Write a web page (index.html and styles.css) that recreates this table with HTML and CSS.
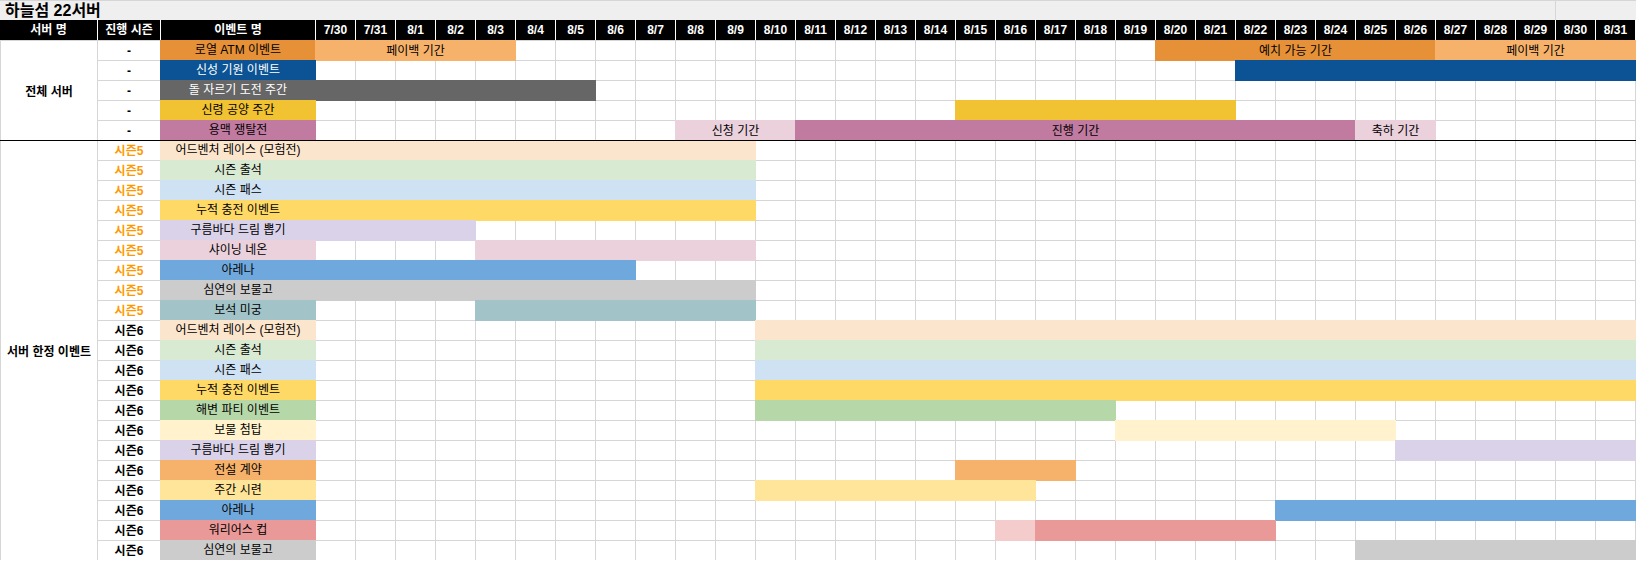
FILE: index.html
```html
<!DOCTYPE html>
<html lang="ko">
<head>
<meta charset="utf-8">
<title>하늘섬 22서버</title>
<link rel="stylesheet" href="styles.css">
</head>
<body>
<div class="sheet">
  <div class="title-row">
    <div class="title">하늘섬 22서버</div>
    <div class="title-rest"></div>
  </div>

  <div class="header">
    <div class="hcell">서버 명</div>
    <div class="hcell">진행 시즌</div>
    <div class="hcell">이벤트 명</div>
    <div class="hcell">7/30</div>
    <div class="hcell">7/31</div>
    <div class="hcell">8/1</div>
    <div class="hcell">8/2</div>
    <div class="hcell">8/3</div>
    <div class="hcell">8/4</div>
    <div class="hcell">8/5</div>
    <div class="hcell">8/6</div>
    <div class="hcell">8/7</div>
    <div class="hcell">8/8</div>
    <div class="hcell">8/9</div>
    <div class="hcell">8/10</div>
    <div class="hcell">8/11</div>
    <div class="hcell">8/12</div>
    <div class="hcell">8/13</div>
    <div class="hcell">8/14</div>
    <div class="hcell">8/15</div>
    <div class="hcell">8/16</div>
    <div class="hcell">8/17</div>
    <div class="hcell">8/18</div>
    <div class="hcell">8/19</div>
    <div class="hcell">8/20</div>
    <div class="hcell">8/21</div>
    <div class="hcell">8/22</div>
    <div class="hcell">8/23</div>
    <div class="hcell">8/24</div>
    <div class="hcell">8/25</div>
    <div class="hcell">8/26</div>
    <div class="hcell">8/27</div>
    <div class="hcell">8/28</div>
    <div class="hcell">8/29</div>
    <div class="hcell">8/30</div>
    <div class="hcell">8/31</div>
  </div>

  <div class="body">
    <div class="rule rule-mid"></div>
    <div class="rule rule-end"></div>

    <!-- 전체 서버 -->
    <div class="group group-all">전체 서버</div>

    <div class="season">-</div>
    <div class="name c-orange">로열 ATM 이벤트</div>
    <div class="days">
      <div class="bar c-lorange" style="grid-column: 1 / span 5">페이백 기간</div>
      <div class="bar c-orange" style="grid-column: 22 / span 7">예치 가능 기간</div>
      <div class="bar c-lorange" style="grid-column: 29 / span 5">페이백 기간</div>
    </div>

    <div class="season">-</div>
    <div class="name c-navy t-white">신성 기원 이벤트</div>
    <div class="days">
      <div class="bar c-navy" style="grid-column: 24 / span 10"></div>
    </div>

    <div class="season">-</div>
    <div class="name c-gray t-white">돌 자르기 도전 주간</div>
    <div class="days">
      <div class="bar c-gray" style="grid-column: 1 / span 7"></div>
    </div>

    <div class="season">-</div>
    <div class="name c-gold">신령 공양 주간</div>
    <div class="days">
      <div class="bar c-gold" style="grid-column: 17 / span 7"></div>
    </div>

    <div class="season">-</div>
    <div class="name c-magenta">용맥 쟁탈전</div>
    <div class="days">
      <div class="bar c-lpink" style="grid-column: 10 / span 3">신청 기간</div>
      <div class="bar c-magenta" style="grid-column: 13 / span 14">진행 기간</div>
      <div class="bar c-lpink" style="grid-column: 27 / span 2">축하 기간</div>
    </div>

    <!-- 서버 한정 이벤트 -->
    <div class="group group-server">서버 한정 이벤트</div>

    <div class="season s5">시즌5</div>
    <div class="name c-peach">어드벤처 레이스 (모험전)</div>
    <div class="days">
      <div class="bar c-peach" style="grid-column: 1 / span 11"></div>
    </div>

    <div class="season s5">시즌5</div>
    <div class="name c-lgreen">시즌 출석</div>
    <div class="days">
      <div class="bar c-lgreen" style="grid-column: 1 / span 11"></div>
    </div>

    <div class="season s5">시즌5</div>
    <div class="name c-lblue">시즌 패스</div>
    <div class="days">
      <div class="bar c-lblue" style="grid-column: 1 / span 11"></div>
    </div>

    <div class="season s5">시즌5</div>
    <div class="name c-yellow">누적 충전 이벤트</div>
    <div class="days">
      <div class="bar c-yellow" style="grid-column: 1 / span 11"></div>
    </div>

    <div class="season s5">시즌5</div>
    <div class="name c-lavender">구름바다 드림 뽑기</div>
    <div class="days">
      <div class="bar c-lavender" style="grid-column: 1 / span 4"></div>
    </div>

    <div class="season s5">시즌5</div>
    <div class="name c-lpink">샤이닝 네온</div>
    <div class="days">
      <div class="bar c-lpink" style="grid-column: 5 / span 7"></div>
    </div>

    <div class="season s5">시즌5</div>
    <div class="name c-blue">아레나</div>
    <div class="days">
      <div class="bar c-blue" style="grid-column: 1 / span 8"></div>
    </div>

    <div class="season s5">시즌5</div>
    <div class="name c-silver">심연의 보물고</div>
    <div class="days">
      <div class="bar c-silver" style="grid-column: 1 / span 11"></div>
    </div>

    <div class="season s5">시즌5</div>
    <div class="name c-teal">보석 미궁</div>
    <div class="days">
      <div class="bar c-teal" style="grid-column: 5 / span 7"></div>
    </div>

    <div class="season">시즌6</div>
    <div class="name c-peach">어드벤처 레이스 (모험전)</div>
    <div class="days">
      <div class="bar c-peach" style="grid-column: 12 / span 22"></div>
    </div>

    <div class="season">시즌6</div>
    <div class="name c-lgreen">시즌 출석</div>
    <div class="days">
      <div class="bar c-lgreen" style="grid-column: 12 / span 22"></div>
    </div>

    <div class="season">시즌6</div>
    <div class="name c-lblue">시즌 패스</div>
    <div class="days">
      <div class="bar c-lblue" style="grid-column: 12 / span 22"></div>
    </div>

    <div class="season">시즌6</div>
    <div class="name c-yellow">누적 충전 이벤트</div>
    <div class="days">
      <div class="bar c-yellow" style="grid-column: 12 / span 22"></div>
    </div>

    <div class="season">시즌6</div>
    <div class="name c-green">해변 파티 이벤트</div>
    <div class="days">
      <div class="bar c-green" style="grid-column: 12 / span 9"></div>
    </div>

    <div class="season">시즌6</div>
    <div class="name c-cream">보물 첨탑</div>
    <div class="days">
      <div class="bar c-cream" style="grid-column: 21 / span 7"></div>
    </div>

    <div class="season">시즌6</div>
    <div class="name c-lavender">구름바다 드림 뽑기</div>
    <div class="days">
      <div class="bar c-lavender" style="grid-column: 28 / span 6"></div>
    </div>

    <div class="season">시즌6</div>
    <div class="name c-lorange">전설 계약</div>
    <div class="days">
      <div class="bar c-lorange" style="grid-column: 17 / span 3"></div>
    </div>

    <div class="season">시즌6</div>
    <div class="name c-lyellow">주간 시련</div>
    <div class="days">
      <div class="bar c-lyellow" style="grid-column: 12 / span 7"></div>
    </div>

    <div class="season">시즌6</div>
    <div class="name c-blue">아레나</div>
    <div class="days">
      <div class="bar c-blue" style="grid-column: 25 / span 9"></div>
    </div>

    <div class="season">시즌6</div>
    <div class="name c-red">워리어스 컵</div>
    <div class="days">
      <div class="bar c-lred" style="grid-column: 18 / span 1"></div>
      <div class="bar c-red" style="grid-column: 19 / span 6"></div>
    </div>

    <div class="season">시즌6</div>
    <div class="name c-silver">심연의 보물고</div>
    <div class="days">
      <div class="bar c-silver" style="grid-column: 27 / span 7"></div>
    </div>
  </div>
</div>
</body>
</html>
```

FILE: styles.css
```css
* {
  box-sizing: border-box;
}

html,
body {
  margin: 0;
  padding: 0;
  background: #ffffff;
}

body {
  font-family: "Liberation Sans", "Noto Sans CJK KR", sans-serif;
  font-size: 12px;
  color: #000000;
}

.sheet {
  width: 1636px;
}

/* title row */
.title-row {
  display: grid;
  grid-template-columns: 1555px 81px;
  height: 20px;
  background: #efefef;
  border-top: 1px solid #d6d6d6;
}

.title {
  font-size: 16px;
  font-weight: bold;
  line-height: 19px;
  padding-left: 5px;
  white-space: nowrap;
}

.title-rest {
  border-left: 1px solid #d6d6d6;
}

/* header row */
.header {
  display: grid;
  grid-template-columns: 97px 63px 155px repeat(33, 40px);
  width: 1635px;
  height: 20px;
  background: #000000;
}

.hcell {
  display: flex;
  align-items: center;
  justify-content: center;
  color: #ffffff;
  font-weight: bold;
  line-height: 1;
  white-space: nowrap;
  border-left: 1px solid #ffffff;
}

.hcell:first-child {
  border-left: none;
}

/* body grid */
.body {
  display: grid;
  grid-template-columns: 97px 63px 155px 1321px;
  grid-template-rows: repeat(5, 20px) 0 repeat(21, 20px) 0;
}

.rule {
  grid-column: 1 / -1;
  align-self: start;
  height: 1px;
  background: #000000;
  z-index: 2;
}

.rule-mid {
  grid-row: 6;
}

.rule-end {
  grid-row: 28;
  margin-right: 1px;
}

.group {
  grid-column: 1;
  display: flex;
  align-items: center;
  justify-content: center;
  font-weight: bold;
  white-space: nowrap;
  background: #ffffff;
  border-left: 1px solid #d6d6d6;
  border-top: 1px solid #d6d6d6;
}

.group-all {
  grid-row: span 5;
}

.group-server {
  grid-row: span 21;
}

.season {
  grid-column: 2;
  display: flex;
  align-items: center;
  justify-content: center;
  font-weight: bold;
  line-height: 1;
  white-space: nowrap;
  border-left: 1px solid #d6d6d6;
  border-top: 1px solid #d6d6d6;
}

.season.s5 {
  color: #ff9900;
}

.name {
  grid-column: 3;
  display: flex;
  align-items: center;
  justify-content: center;
  line-height: 1;
  white-space: nowrap;
  margin-right: -1px;
  z-index: 1;
}

.days {
  grid-column: 4;
  display: grid;
  grid-template-columns: repeat(33, 40px);
  grid-template-rows: 19px;
  border-top: 1px solid #d6d6d6;
  background-image: linear-gradient(to right, #d6d6d6 1px, transparent 1px);
  background-size: 40px 100%;
}

.bar {
  grid-row: 1;
  display: flex;
  align-items: center;
  justify-content: center;
  line-height: 1;
  white-space: nowrap;
  margin: -1px -1px -1px 0;
  z-index: 1;
}

.t-white {
  color: #ffffff;
}

/* fills */
.c-orange { background: #e69138; }
.c-lorange { background: #f6b26b; }
.c-navy { background: #0b5394; }
.c-gray { background: #666666; }
.c-gold { background: #f1c232; }
.c-magenta { background: #c27ba0; }
.c-lpink { background: #ead1dc; }
.c-peach { background: #fce5cd; }
.c-lgreen { background: #d9ead3; }
.c-lblue { background: #cfe2f3; }
.c-yellow { background: #ffd966; }
.c-lavender { background: #d9d2e9; }
.c-blue { background: #6fa8dc; }
.c-silver { background: #cccccc; }
.c-teal { background: #a2c4c9; }
.c-green { background: #b6d7a8; }
.c-cream { background: #fff2cc; }
.c-lyellow { background: #ffe599; }
.c-red { background: #ea9999; }
.c-lred { background: #f4cccc; }
```
